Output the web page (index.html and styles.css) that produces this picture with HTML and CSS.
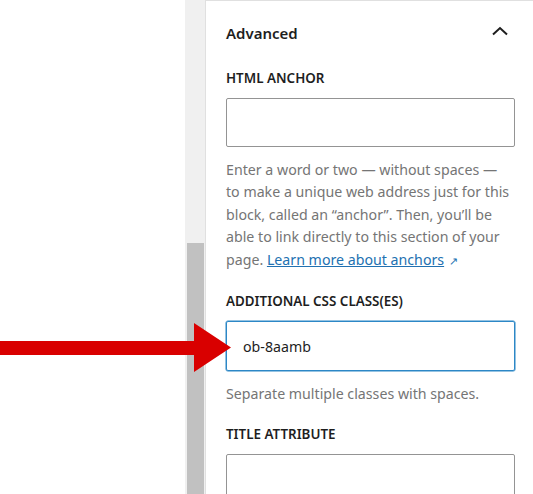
FILE: index.html
```html
<!DOCTYPE html>
<html>
<head>
<meta charset="utf-8">
<link rel="stylesheet" href="styles.css">
</head>
<body>
<div class="page">
  <div class="canvas"></div>
  <div class="scrollbar"><div class="thumb"></div></div>
  <div class="panel">
    <div class="panel-head">
      <span class="panel-title">Advanced</span>
      <svg class="chevron" width="24" height="24" viewBox="0 0 24 24"><path d="M5 13.5 L12 7 L19 13.5" fill="none" stroke="#1e1e1e" stroke-width="2"/></svg>
    </div>
    <div class="field">
      <div class="label">HTML ANCHOR</div>
      <div class="input"></div>
      <p class="help wrap">Enter a word or two — without spaces — to make a unique web address just for this block, called an “anchor”. Then, you’ll be able to link directly to this section of your page. <a class="link" href="#">Learn more about anchors</a><span class="ext">↗</span></p>
    </div>
    <div class="field">
      <div class="label">ADDITIONAL CSS CLASS(ES)</div>
      <div class="input focused">ob-8aamb</div>
      <p class="help">Separate multiple classes with spaces.</p>
    </div>
    <div class="field">
      <div class="label">TITLE ATTRIBUTE</div>
      <div class="input tall"></div>
    </div>
  </div>
  <svg class="arrow" width="232" height="50" viewBox="0 0 232 50"><polygon points="0,18 194,18 194,0 231,24.5 194,49 194,32 0,32" fill="#d90000"/></svg>
</div>
</body>
</html>
```

FILE: styles.css
```css
html, body {
  margin: 0;
  padding: 0;
  background: #fff;
}
.page {
  position: relative;
  display: flex;
  width: 533px;
  height: 494px;
  overflow: hidden;
  font-family: "Noto Sans", "Open Sans", sans-serif;
}
.canvas {
  width: 185px;
  flex: none;
  background: #fff;
}
.scrollbar {
  width: 20px;
  flex: none;
  background: #f0f0f0;
  display: flex;
  flex-direction: column;
  justify-content: flex-end;
  align-items: center;
}
.thumb {
  width: 17px;
  height: 251px;
  background: #c1c1c1;
}
.panel {
  flex: 1;
  border-left: 1px solid #e0e0e0;
  border-top: 1px solid #e0e0e0;
  padding: 0 18px 0 20px;
  box-sizing: border-box;
}
.panel-head {
  display: flex;
  justify-content: space-between;
  align-items: center;
  height: 64px;
  margin-bottom: 3px;
}
.panel-title {
  font-size: 15px;
  font-weight: 600;
  color: #1e1e1e;
}
.chevron {
  margin-right: 3px;
}
.field {
  display: flex;
  flex-direction: column;
}
.label {
  font-size: 13.4px;
  font-weight: 600;
  color: #1e1e1e;
  line-height: 20px;
  margin-bottom: 10px;
}
.input {
  height: 49px;
  box-sizing: border-box;
  border: 1px solid #949494;
  border-radius: 2px;
}
.input.focused {
  border: 1px solid #2c87c6;
  box-shadow: 0 0 0 0.5px #2c87c6;
  height: 50px;
  padding-left: 16px;
  display: flex;
  align-items: center;
  font-size: 14.2px;
  color: #1e1e1e;
}
.input.tall {
  height: 60px;
}
.help {
  margin: 11.5px 0 19px;
  font-size: 14.2px;
  line-height: 22.5px;
  color: #757575;
}
.help.wrap {
  padding-right: 4px;
}
.link {
  color: #2271b1;
  text-decoration: underline;
}
.ext {
  color: #2271b1;
  font-size: 11px;
  margin-left: 5px;
}
.arrow {
  position: absolute;
  left: 0;
  top: 323px;
}
```
